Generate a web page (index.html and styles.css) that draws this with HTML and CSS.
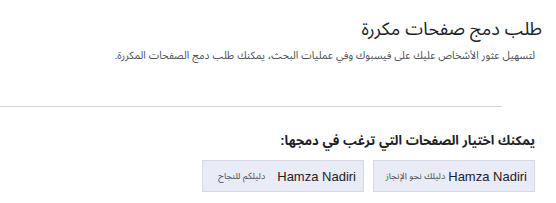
FILE: index.html
```html
<!DOCTYPE html>
<html lang="ar" dir="rtl">
<head>
    <meta charset="UTF-8">
    <title>طلب دمج صفحات مكررة</title>
    <link rel="stylesheet" href="styles.css">
</head>
<body>
    <!-- العنوان -->
    <div class="header">
        <h1>طلب دمج صفحات مكررة</h1>
        <p>لتسهيل عثور الأشخاص عليك على فيسبوك وفي عمليات البحث، يمكنك طلب دمج الصفحات المكررة.</p>
    </div>

    <div class="divider"></div>

    <!-- اختيار الصفحات -->
    <div class="pages">
        <h3>يمكنك اختيار الصفحات التي ترغب في دمجها:</h3>
        <div class="page-list">
            <button class="page-btn">
                <span class="name">Hamza Nadiri</span>
                <span class="desc">دليلك نحو الإنجاز</span>
            </button>
            <button class="page-btn second">
                <span class="name">Hamza Nadiri</span>
                <span class="desc">دليلكم للنجاح</span>
            </button>
        </div>
    </div>
</body>
</html>
```

FILE: styles.css
```css
* {
    margin: 0;
    padding: 0;
    box-sizing: border-box;
}

body {
    font-family: 'Liberation Sans', 'Noto Sans Arabic', Arial, sans-serif;
    background: #fff;
    color: #1d2129;
    width: 556px;
    height: 203px;
    overflow: hidden;
}

/* العنوان */
.header {
    padding: 17px 21px 0 0;
}

.header h1 {
    font-size: 18px;
    font-weight: normal;
    color: #1d2129;
    line-height: 25px;
    margin-right: -7px;
}

.header p {
    font-size: 10.5px;
    line-height: 14px;
    color: #4b4f56;
    margin-top: 6px;
    white-space: nowrap;
}

.divider {
    height: 1px;
    background: #d3d5d9;
    margin: 44px 54px 0 0;
}

/* الصفحات */
.pages {
    padding: 25px 21px 0 0;
}

.pages h3 {
    font-size: 13px;
    font-weight: bold;
    color: #1d2129;
    line-height: 18px;
}

.page-list {
    display: flex;
    gap: 9px;
    margin-top: 10px;
}

.page-btn {
    width: 162px;
    height: 32px;
    background: #e9ebf6;
    border: 1px solid #d6d9e6;
    display: flex;
    align-items: center;
    gap: 3px;
    padding: 0 7px;
    font-family: inherit;
    white-space: nowrap;
    overflow: hidden;
    direction: ltr;
    justify-content: flex-end;
}

.page-btn.second {
    gap: 12px;
}

.page-btn .name {
    order: 2;
    font-size: 13px;
    color: #1d2129;
}

.page-btn .desc {
    order: 1;
    font-size: 9px;
    color: #4b4f56;
    direction: rtl;
}
```
